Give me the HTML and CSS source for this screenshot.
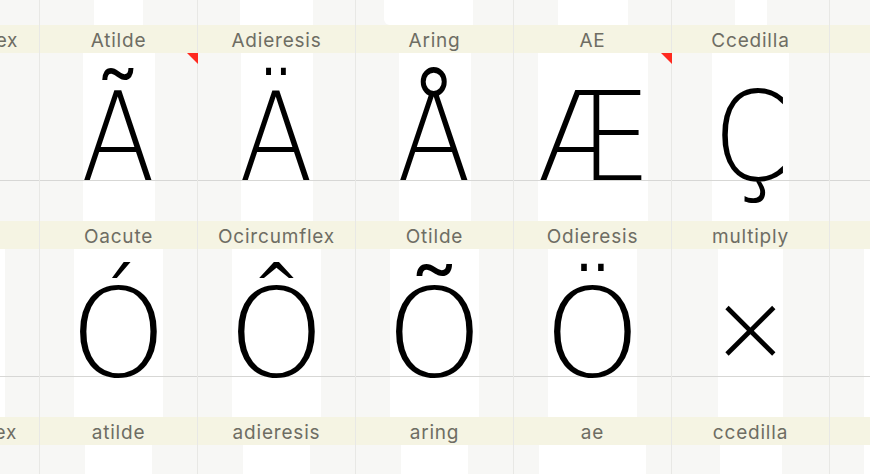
FILE: index.html
```html
<!DOCTYPE html>
<html>

<head>
    <meta charset="UTF-8">
    <meta name="viewport" content="width=device-width, initial-scale=1.0">
    <title>Font View</title>
    <link rel="stylesheet" href="styles.css">
</head>

<body>
    <!-- glyph grid, first row is scrolled mostly out of view -->
    <div class="sheet">
        <div class="row">
            <div class="cell"><div class="name">Agrave</div><div class="area"></div></div>
            <div class="cell"><div class="name">Aacute</div><div class="area"><div class="box" style="width:49px"></div></div></div>
            <div class="cell"><div class="name">Acircumflex</div><div class="area"><div class="box" style="width:73px"></div></div></div>
            <div class="cell"><div class="name">Atilde</div><div class="area"><div class="box box-wide" style="width:89px"></div></div></div>
            <div class="cell"><div class="name">Adieresis</div><div class="area"><div class="box" style="width:70px"></div></div></div>
            <div class="cell"><div class="name">Aring</div><div class="area"><div class="box" style="width:32px"></div></div></div>
            <div class="cell"><div class="name">AE</div><div class="area"></div></div>
        </div>

        <div class="row">
            <div class="cell"><div class="name">Acircumflex</div><div class="area"><div class="box" style="width:72px"><span class="glyph narrow">Â</span></div></div></div>
            <div class="cell"><div class="name">Atilde</div><div class="area"><div class="box" style="width:72px"><span class="glyph narrow">Ã</span></div><span class="flag"></span></div></div>
            <div class="cell"><div class="name">Adieresis</div><div class="area"><div class="box" style="width:72px"><span class="glyph narrow">Ä</span></div></div></div>
            <div class="cell"><div class="name">Aring</div><div class="area"><div class="box" style="width:72px"><span class="glyph narrow">Å</span></div></div></div>
            <div class="cell"><div class="name">AE</div><div class="area"><div class="box" style="width:110px"><span class="glyph narrow-ae">Æ</span></div><span class="flag"></span></div></div>
            <div class="cell"><div class="name">Ccedilla</div><div class="area"><div class="box" style="width:77px"><span class="glyph narrow">Ç</span></div></div></div>
            <div class="cell"><div class="name">Egrave</div><div class="area"><div class="box" style="width:60px"></div></div></div>
        </div>

        <div class="row">
            <div class="cell"><div class="name">Ograve</div><div class="area"><div class="box" style="width:89px"><span class="glyph">Ò</span></div></div></div>
            <div class="cell"><div class="name">Oacute</div><div class="area"><div class="box" style="width:89px"><span class="glyph">Ó</span></div></div></div>
            <div class="cell"><div class="name">Ocircumflex</div><div class="area"><div class="box" style="width:89px"><span class="glyph">Ô</span></div></div></div>
            <div class="cell"><div class="name">Otilde</div><div class="area"><div class="box" style="width:89px"><span class="glyph">Õ</span></div></div></div>
            <div class="cell"><div class="name">Odieresis</div><div class="area"><div class="box" style="width:89px"><span class="glyph">Ö</span></div></div></div>
            <div class="cell"><div class="name">multiply</div><div class="area"><div class="box" style="width:65px"><span class="glyph glyph-math">×</span></div></div></div>
            <div class="cell"><div class="name">Oslash</div><div class="area"><div class="box" style="width:90px"></div></div></div>
        </div>

        <div class="row">
            <div class="cell"><div class="name">acircumflex</div><div class="area"><div class="box" style="width:67px"></div></div></div>
            <div class="cell"><div class="name">atilde</div><div class="area"><div class="box" style="width:67px"></div></div></div>
            <div class="cell"><div class="name">adieresis</div><div class="area"><div class="box" style="width:67px"></div></div></div>
            <div class="cell"><div class="name">aring</div><div class="area"><div class="box" style="width:67px"></div></div></div>
            <div class="cell"><div class="name">ae</div><div class="area"><div class="box" style="width:107px"></div></div></div>
            <div class="cell"><div class="name">ccedilla</div><div class="area"><div class="box" style="width:62px"></div></div></div>
            <div class="cell"><div class="name">oslash</div><div class="area"><div class="box" style="width:90px"></div></div></div>
        </div>
    </div>
</body>

</html>
```

FILE: styles.css
```css
/* Basic reset */
* {
    margin: 0;
    padding: 0;
    box-sizing: border-box;
}

body,
html {
    width: 100%;
    height: 100%;
    overflow: hidden;
    background-color: #f7f7f5;
}

/* the grid is scrolled: first row only shows its last 25px */
.sheet {
    margin-top: -171px;
    margin-left: -119px;
}

.row {
    display: flex;
}

.cell {
    width: 158px;
    flex: none;
    border-left: 1px solid #e8e8e5;
}

.name {
    height: 28px;
    line-height: 32px;
    text-align: center;
    white-space: nowrap;
    background-color: #f5f4e3;
    color: #6e6d63;
    font-family: Inter, "Noto Sans", sans-serif;
    font-size: 19px;
    letter-spacing: 0.8px;
}

.area {
    position: relative;
    height: 168px;
    display: flex;
    justify-content: center;
}

/* baseline */
.area::before {
    content: "";
    position: absolute;
    left: 0;
    right: 0;
    top: 127px;
    height: 1px;
    background-color: #d7d7d5;
}

.box {
    height: 100%;
    display: flex;
    justify-content: center;
    background-color: #fff;
}

.box-wide {
    margin-right: 12px;
    border-bottom-left-radius: 6px;
}

.glyph {
    position: relative;
    z-index: 1;
    padding-top: 23px;
    font-family: "DejaVu Sans", sans-serif;
    font-weight: 200;
    font-size: 123px;
    line-height: 1;
    white-space: nowrap;
    color: #000;
}

/* the drawn font is a little narrower than DejaVu */
.narrow {
    transform: scaleX(0.88);
}

.narrow-ae {
    transform: scaleX(0.93);
}

.glyph-math {
    font-size: 97px;
    padding-top: 30px;
}

/* red corner mark */
.flag {
    position: absolute;
    top: 0;
    right: -1px;
    width: 0;
    height: 0;
    border-top: 11px solid #ff2a1f;
    border-left: 11px solid transparent;
    z-index: 2;
}
```
